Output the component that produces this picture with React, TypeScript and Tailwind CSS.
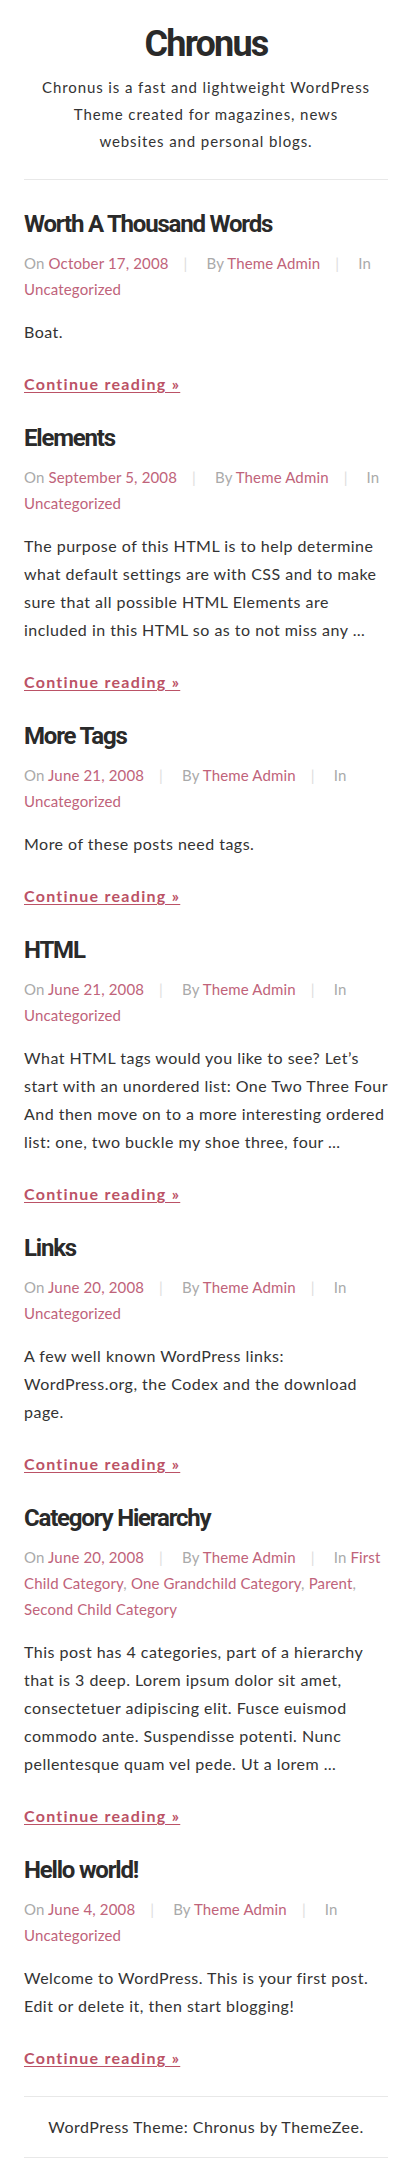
import React from "react";

type Post = {
  title: string;
  date: string;
  cats: string[];
  excerpt: string;
};

const POSTS: Post[] = [
  { title: "Worth A Thousand Words", date: "October 17, 2008", cats: ["Uncategorized"], excerpt: "Boat." },
  {
    title: "Elements",
    date: "September 5, 2008",
    cats: ["Uncategorized"],
    excerpt:
      "The purpose of this HTML is to help determine what default settings are with CSS and to make sure that all possible HTML Elements are included in this HTML so as to not miss any …",
  },
  { title: "More Tags", date: "June 21, 2008", cats: ["Uncategorized"], excerpt: "More of these posts need tags." },
  {
    title: "HTML",
    date: "June 21, 2008",
    cats: ["Uncategorized"],
    excerpt:
      "What HTML tags would you like to see? Let’s start with an unordered list: One Two Three Four And then move on to a more interesting ordered list: one, two buckle my shoe three, four …",
  },
  {
    title: "Links",
    date: "June 20, 2008",
    cats: ["Uncategorized"],
    excerpt: "A few well known WordPress links: WordPress.org, the Codex and the download page.",
  },
  {
    title: "Category Hierarchy",
    date: "June 20, 2008",
    cats: ["First Child Category", "One Grandchild Category", "Parent", "Second Child Category"],
    excerpt:
      "This post has 4 categories, part of a hierarchy that is 3 deep. Lorem ipsum dolor sit amet, consectetuer adipiscing elit. Fusce euismod commodo ante. Suspendisse potenti. Nunc pellentesque quam vel pede. Ut a lorem …",
  },
  {
    title: "Hello world!",
    date: "June 4, 2008",
    cats: ["Uncategorized"],
    excerpt: "Welcome to WordPress. This is your first post. Edit or delete it, then start blogging!",
  },
];

const body = "font-['Lato','Open_Sans',sans-serif]";
const heading = "font-['Roboto','Liberation_Sans',sans-serif]";

function Sep() {
  return <span className="ml-[15px] mr-[19px] text-[#dddddd]">|</span>;
}

function Article({ post }: { post: Post }) {
  return (
    <article className="mt-[25px] first:mt-0">
      <h2 className={`${heading} text-[24px] leading-[30px] font-bold tracking-[-0.05em] text-[#2a2a2a]`}>
        {post.title}
      </h2>
      <div className="mt-[11px] text-[15px] leading-[26px] tracking-[0.01em] text-[#aaaaaa]">
        On <a href="#" className="text-[#c0637a]">{post.date}</a>
        <Sep />
        By <a href="#" className="text-[#c0637a]">Theme Admin</a>
        <Sep />
        In{" "}
        {post.cats.map((c, i) => (
          <React.Fragment key={c}>
            <a href="#" className="text-[#c0637a]">{c}</a>
            {i < post.cats.length - 1 ? ", " : ""}
          </React.Fragment>
        ))}
      </div>
      <p className="mt-4 text-[16px] leading-[28px] tracking-[0.03em] text-[#333333]">{post.excerpt}</p>
      <p className="mt-6 text-[16px] leading-[28px]">
        <a href="#" className="font-bold tracking-[0.08em] text-[#bb5266] underline underline-offset-2">
          Continue reading »
        </a>
      </p>
    </article>
  );
}

export default function App() {
  return (
    <div className={`${body} min-h-[2180px] bg-white px-6`}>
      <header className="pt-[22px] pb-6 text-center border-b border-[#e8e8e8]">
        <h1 className={`${heading} text-[36px] leading-[44px] font-bold tracking-[-0.05em] text-[#2a2a2a]`}>
          Chronus
        </h1>
        <p className="mt-2 text-[15px] leading-[27px] tracking-[0.06em] text-[#333333]">
          Chronus is a fast and lightweight WordPress
          <br />
          Theme created for magazines, news
          <br />
          websites and personal blogs.
        </p>
      </header>

      <main className="pt-[29px] pb-6">
        {POSTS.map((p) => (
          <Article key={p.title} post={p} />
        ))}
      </main>

      <footer className="border-y border-[#e8e8e8] py-[18px] text-center text-[16px] leading-6 tracking-[0.03em] text-[#333333]">
        WordPress Theme: Chronus by ThemeZee.
      </footer>
    </div>
  );
}
